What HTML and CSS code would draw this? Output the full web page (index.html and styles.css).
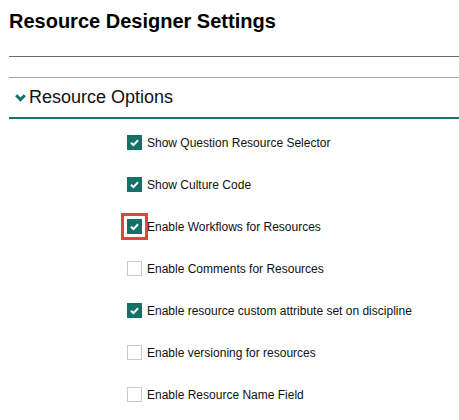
FILE: index.html
```html
<!DOCTYPE html>
<html>
<head>
<meta charset="utf-8">
<link rel="stylesheet" href="styles.css">
</head>
<body>
<div class="page">
  <h1 class="title">Resource Designer Settings</h1>
  <hr class="rule-dark">
  <hr class="rule-light">
  <div class="section-head">
    <svg class="chevron" width="11" height="8" viewBox="0 0 11 8"><path d="M1.2 1.3 L5.5 5.6 L9.8 1.3" fill="none" stroke="#17706a" stroke-width="3"/></svg>
    <span class="section-title">Resource Options</span>
  </div>
  <ul class="options">
    <li class="option"><span class="box checked"><svg viewBox="0 0 14 14"><path d="M3.2 7.2 L5.9 9.8 L10.8 4.6" fill="none" stroke="#fff" stroke-width="2.2"/></svg></span><span class="label">Show Question Resource Selector</span></li>
    <li class="option"><span class="box checked"><svg viewBox="0 0 14 14"><path d="M3.2 7.2 L5.9 9.8 L10.8 4.6" fill="none" stroke="#fff" stroke-width="2.2"/></svg></span><span class="label">Show Culture Code</span></li>
    <li class="option"><span class="focus"><span class="box checked"><svg viewBox="0 0 14 14"><path d="M3.2 7.2 L5.9 9.8 L10.8 4.6" fill="none" stroke="#fff" stroke-width="2.2"/></svg></span></span><span class="label">Enable Workflows for Resources</span></li>
    <li class="option"><span class="box"></span><span class="label">Enable Comments for Resources</span></li>
    <li class="option"><span class="box checked"><svg viewBox="0 0 14 14"><path d="M3.2 7.2 L5.9 9.8 L10.8 4.6" fill="none" stroke="#fff" stroke-width="2.2"/></svg></span><span class="label">Enable resource custom attribute set on discipline</span></li>
    <li class="option"><span class="box"></span><span class="label">Enable versioning for resources</span></li>
    <li class="option"><span class="box"></span><span class="label">Enable Resource Name Field</span></li>
  </ul>
</div>
</body>
</html>
```
FILE: styles.css
```css
html, body {
  margin: 0;
  padding: 0;
  background: #fff;
}
body {
  font-family: "Liberation Sans", Arial, sans-serif;
  color: #000;
}
.page {
  padding: 0 0 0 9px;
}
.title {
  margin: 0;
  padding-top: 10px;
  font-size: 20px;
  font-weight: bold;
  line-height: 22px;
  height: 46px;
}
.rule-dark {
  margin: 0;
  border: 0;
  border-top: 1px solid #6a6a6a;
  height: 0;
}
.rule-light {
  margin: 20px 0 0 0;
  border: 0;
  border-top: 1px solid #a0a0a0;
  height: 0;
}
.section-head {
  display: flex;
  align-items: center;
  height: 39px;
  border-bottom: 2px solid #15756d;
  padding-left: 6px;
  gap: 3px;
}
.chevron {
  display: block;
  margin-top: 0;
}
.section-title {
  font-size: 18px;
  color: #111;
}
.options {
  list-style: none;
  margin: 0;
  padding: 16px 0 0 118px;
}
.option {
  display: flex;
  align-items: center;
  height: 15px;
  margin-bottom: 27px;
}
.box {
  box-sizing: border-box;
  width: 15px;
  height: 15px;
  border: 1px solid #c9c9c9;
  background: #fff;
  display: flex;
  flex: none;
}
.box.checked {
  background: #16706a;
  border-color: #16706a;
}
.box svg {
  width: 13px;
  height: 13px;
}
.focus {
  display: flex;
  flex: none;
  margin: -6px -6px -6px -6px;
  padding: 3px;
  border: 3px solid #e0443e;
}
.label {
  margin-left: 5px;
  font-size: 12px;
  color: #111;
}
```
